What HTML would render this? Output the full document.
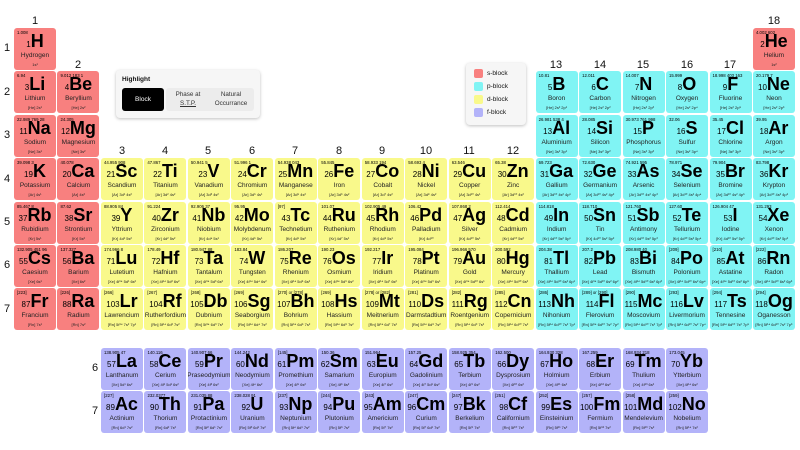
<!DOCTYPE html>
<html><head><meta charset="utf-8"><style>
*{margin:0;padding:0;box-sizing:border-box}
body{width:800px;height:450px;background:#fff;font-family:"Liberation Sans",sans-serif;position:relative;overflow:hidden;color:#111}
.g{position:absolute;display:grid;grid-template-columns:repeat(18,43.47px);grid-template-rows:repeat(7,43.4px)}
.f{position:absolute;left:101px;top:348px;display:grid;grid-template-columns:repeat(14,43.47px);grid-template-rows:repeat(2,43px)}
.c{width:42px;height:42px;border-radius:3px;position:relative;text-align:center;overflow:hidden}
.s{background:#f8807f}.p{background:#80f4f4}.d{background:#f9f98b}.fb{background:#b3b3f9}
.c i{position:absolute;left:3px;top:2px;font-style:normal;font-size:4.3px;white-space:nowrap;color:#000}
.c b{position:absolute;left:0;right:0;top:4px;font-size:18px;line-height:19px;font-weight:bold;white-space:nowrap;color:#000}
.c b small{font-size:8px;font-weight:normal}
.c u{position:absolute;left:-4px;right:-4px;top:24px;text-decoration:none;font-size:6.5px;white-space:nowrap;color:#222}
.c em{position:absolute;left:-4px;right:-4px;top:34px;font-style:normal;font-size:4px;white-space:nowrap;color:#222}
.n{position:absolute;font-size:11px;text-align:center;width:20px}
.hl{position:absolute;left:116px;top:70px;width:144px;height:48px;background:#f6f6f6;border-radius:4px;box-shadow:0 1px 3px rgba(0,0,0,.25)}
.lg{position:absolute;left:466px;top:63px;width:60px;height:62px;background:#f6f6f6;border-radius:4px;box-shadow:0 1px 3px rgba(0,0,0,.25);font-size:6.5px}
.lg div{position:absolute;left:8px;width:9px;height:9px;border-radius:2px}
.lg span{position:absolute;left:21px}
</style></head><body>
<div class="n" style="left:25px;top:15px">1</div>
<div class="n" style="left:68px;top:59px">2</div>
<div class="n" style="left:112px;top:145px">3</div><div class="n" style="left:155px;top:145px">4</div><div class="n" style="left:198px;top:145px">5</div><div class="n" style="left:242px;top:145px">6</div><div class="n" style="left:285px;top:145px">7</div><div class="n" style="left:329px;top:145px">8</div><div class="n" style="left:372px;top:145px">9</div><div class="n" style="left:416px;top:145px">10</div><div class="n" style="left:459px;top:145px">11</div><div class="n" style="left:503px;top:145px">12</div>
<div class="n" style="left:546px;top:59px">13</div><div class="n" style="left:590px;top:59px">14</div><div class="n" style="left:633px;top:59px">15</div><div class="n" style="left:677px;top:59px">16</div><div class="n" style="left:720px;top:59px">17</div><div class="n" style="left:764px;top:15px">18</div>
<div class="n" style="left:-3px;top:42px">1</div><div class="n" style="left:-3px;top:86px">2</div><div class="n" style="left:-3px;top:129px">3</div><div class="n" style="left:-3px;top:173px">4</div><div class="n" style="left:-3px;top:216px">5</div><div class="n" style="left:-3px;top:259px">6</div><div class="n" style="left:-3px;top:303px">7</div>
<div class="n" style="left:85px;top:362px">6</div><div class="n" style="left:85px;top:405px">7</div>

<div class="hl"><div style="position:absolute;left:6px;top:6px;font-size:6.5px;font-weight:bold">Highlight</div>
<div style="position:absolute;left:6px;top:18px;width:42px;height:23px;background:#000;border-radius:3px;color:#fff;font-size:6.5px;line-height:23px;text-align:center">Block</div>
<div style="position:absolute;left:50px;top:18px;width:88px;height:23px;background:#ececec;border-radius:3px"></div>
<div style="position:absolute;left:50px;top:20px;width:44px;font-size:6.3px;text-align:center;line-height:9px;color:#333">Phase at<br><span style="text-decoration:underline">S.T.P.</span></div>
<div style="position:absolute;left:92px;top:20px;width:46px;font-size:6.3px;text-align:center;line-height:9px;color:#333">Natural<br>Occurrance</div></div>
<div class="lg"><div class="s" style="top:6px"></div><span style="top:7px">s-block</span><div class="p" style="top:19px"></div><span style="top:20px">p-block</span><div class="d" style="top:32px"></div><span style="top:33px">d-block</span><div class="fb" style="top:45px"></div><span style="top:46px">f-block</span></div>

<div class="g" style="left:14px;top:28px">
<div class="c s" style="grid-area:1/1"><i>1.008</i><b><small>1</small>H</b><u>Hydrogen</u><em>1s¹</em></div>
<div class="c s" style="grid-area:1/18"><i>4.002 602</i><b><small>2</small>He</b><u>Helium</u><em>1s²</em></div>
<div class="c s" style="grid-area:2/1"><i>6.94</i><b><small>3</small>Li</b><u>Lithium</u><em>[He] 2s¹</em></div>
<div class="c s" style="grid-area:2/2"><i>9.012 183 1</i><b><small>4</small>Be</b><u>Beryllium</u><em>[He] 2s²</em></div>
<div class="c p" style="grid-area:2/13"><i>10.81</i><b><small>5</small>B</b><u>Boron</u><em>[He] 2s² 2p¹</em></div>
<div class="c p" style="grid-area:2/14"><i>12.011</i><b><small>6</small>C</b><u>Carbon</u><em>[He] 2s² 2p²</em></div>
<div class="c p" style="grid-area:2/15"><i>14.007</i><b><small>7</small>N</b><u>Nitrogen</u><em>[He] 2s² 2p³</em></div>
<div class="c p" style="grid-area:2/16"><i>15.999</i><b><small>8</small>O</b><u>Oxygen</u><em>[He] 2s² 2p⁴</em></div>
<div class="c p" style="grid-area:2/17"><i>18.998 403 163</i><b><small>9</small>F</b><u>Fluorine</u><em>[He] 2s² 2p⁵</em></div>
<div class="c p" style="grid-area:2/18"><i>20.179 7</i><b><small>10</small>Ne</b><u>Neon</u><em>[He] 2s² 2p⁶</em></div>
<div class="c s" style="grid-area:3/1"><i>22.989 769 28</i><b><small>11</small>Na</b><u>Sodium</u><em>[Ne] 3s¹</em></div>
<div class="c s" style="grid-area:3/2"><i>24.305</i><b><small>12</small>Mg</b><u>Magnesium</u><em>[Ne] 3s²</em></div>
<div class="c p" style="grid-area:3/13"><i>26.981 538 4</i><b><small>13</small>Al</b><u>Aluminium</u><em>[Ne] 3s² 3p¹</em></div>
<div class="c p" style="grid-area:3/14"><i>28.085</i><b><small>14</small>Si</b><u>Silicon</u><em>[Ne] 3s² 3p²</em></div>
<div class="c p" style="grid-area:3/15"><i>30.973 761 998</i><b><small>15</small>P</b><u>Phosphorus</u><em>[Ne] 3s² 3p³</em></div>
<div class="c p" style="grid-area:3/16"><i>32.06</i><b><small>16</small>S</b><u>Sulfur</u><em>[Ne] 3s² 3p⁴</em></div>
<div class="c p" style="grid-area:3/17"><i>35.45</i><b><small>17</small>Cl</b><u>Chlorine</u><em>[Ne] 3s² 3p⁵</em></div>
<div class="c p" style="grid-area:3/18"><i>39.95</i><b><small>18</small>Ar</b><u>Argon</u><em>[Ne] 3s² 3p⁶</em></div>
<div class="c s" style="grid-area:4/1"><i>39.098 3</i><b><small>19</small>K</b><u>Potassium</u><em>[Ar] 4s¹</em></div>
<div class="c s" style="grid-area:4/2"><i>40.078</i><b><small>20</small>Ca</b><u>Calcium</u><em>[Ar] 4s²</em></div>
<div class="c d" style="grid-area:4/3"><i>44.955 908</i><b><small>21</small>Sc</b><u>Scandium</u><em>[Ar] 3d¹ 4s²</em></div>
<div class="c d" style="grid-area:4/4"><i>47.867</i><b><small>22</small>Ti</b><u>Titanium</u><em>[Ar] 3d² 4s²</em></div>
<div class="c d" style="grid-area:4/5"><i>50.941 5</i><b><small>23</small>V</b><u>Vanadium</u><em>[Ar] 3d³ 4s²</em></div>
<div class="c d" style="grid-area:4/6"><i>51.996 1</i><b><small>24</small>Cr</b><u>Chromium</u><em>[Ar] 3d⁵ 4s¹</em></div>
<div class="c d" style="grid-area:4/7"><i>54.938 043</i><b><small>25</small>Mn</b><u>Manganese</u><em>[Ar] 3d⁵ 4s²</em></div>
<div class="c d" style="grid-area:4/8"><i>55.845</i><b><small>26</small>Fe</b><u>Iron</u><em>[Ar] 3d⁶ 4s²</em></div>
<div class="c d" style="grid-area:4/9"><i>58.933 194</i><b><small>27</small>Co</b><u>Cobalt</u><em>[Ar] 3d⁷ 4s²</em></div>
<div class="c d" style="grid-area:4/10"><i>58.693 4</i><b><small>28</small>Ni</b><u>Nickel</u><em>[Ar] 3d⁸ 4s²</em></div>
<div class="c d" style="grid-area:4/11"><i>63.546</i><b><small>29</small>Cu</b><u>Copper</u><em>[Ar] 3d¹⁰ 4s¹</em></div>
<div class="c d" style="grid-area:4/12"><i>65.38</i><b><small>30</small>Zn</b><u>Zinc</u><em>[Ar] 3d¹⁰ 4s²</em></div>
<div class="c p" style="grid-area:4/13"><i>69.723</i><b><small>31</small>Ga</b><u>Gallium</u><em>[Ar] 3d¹⁰ 4s² 4p¹</em></div>
<div class="c p" style="grid-area:4/14"><i>72.630</i><b><small>32</small>Ge</b><u>Germanium</u><em>[Ar] 3d¹⁰ 4s² 4p²</em></div>
<div class="c p" style="grid-area:4/15"><i>74.921 595</i><b><small>33</small>As</b><u>Arsenic</u><em>[Ar] 3d¹⁰ 4s² 4p³</em></div>
<div class="c p" style="grid-area:4/16"><i>78.971</i><b><small>34</small>Se</b><u>Selenium</u><em>[Ar] 3d¹⁰ 4s² 4p⁴</em></div>
<div class="c p" style="grid-area:4/17"><i>79.904</i><b><small>35</small>Br</b><u>Bromine</u><em>[Ar] 3d¹⁰ 4s² 4p⁵</em></div>
<div class="c p" style="grid-area:4/18"><i>83.798</i><b><small>36</small>Kr</b><u>Krypton</u><em>[Ar] 3d¹⁰ 4s² 4p⁶</em></div>
<div class="c s" style="grid-area:5/1"><i>85.467 8</i><b><small>37</small>Rb</b><u>Rubidium</u><em>[Kr] 5s¹</em></div>
<div class="c s" style="grid-area:5/2"><i>87.62</i><b><small>38</small>Sr</b><u>Strontium</u><em>[Kr] 5s²</em></div>
<div class="c d" style="grid-area:5/3"><i>88.905 84</i><b><small>39</small>Y</b><u>Yttrium</u><em>[Kr] 4d¹ 5s²</em></div>
<div class="c d" style="grid-area:5/4"><i>91.224</i><b><small>40</small>Zr</b><u>Zirconium</u><em>[Kr] 4d² 5s²</em></div>
<div class="c d" style="grid-area:5/5"><i>92.906 37</i><b><small>41</small>Nb</b><u>Niobium</u><em>[Kr] 4d⁴ 5s¹</em></div>
<div class="c d" style="grid-area:5/6"><i>95.95</i><b><small>42</small>Mo</b><u>Molybdenum</u><em>[Kr] 4d⁵ 5s¹</em></div>
<div class="c d" style="grid-area:5/7"><i>[97]</i><b><small>43</small>Tc</b><u>Technetium</u><em>[Kr] 4d⁵ 5s²</em></div>
<div class="c d" style="grid-area:5/8"><i>101.07</i><b><small>44</small>Ru</b><u>Ruthenium</u><em>[Kr] 4d⁷ 5s¹</em></div>
<div class="c d" style="grid-area:5/9"><i>102.905 49</i><b><small>45</small>Rh</b><u>Rhodium</u><em>[Kr] 4d⁸ 5s¹</em></div>
<div class="c d" style="grid-area:5/10"><i>106.42</i><b><small>46</small>Pd</b><u>Palladium</u><em>[Kr] 4d¹⁰</em></div>
<div class="c d" style="grid-area:5/11"><i>107.868 2</i><b><small>47</small>Ag</b><u>Silver</u><em>[Kr] 4d¹⁰ 5s¹</em></div>
<div class="c d" style="grid-area:5/12"><i>112.414</i><b><small>48</small>Cd</b><u>Cadmium</u><em>[Kr] 4d¹⁰ 5s²</em></div>
<div class="c p" style="grid-area:5/13"><i>114.818</i><b><small>49</small>In</b><u>Indium</u><em>[Kr] 4d¹⁰ 5s² 5p¹</em></div>
<div class="c p" style="grid-area:5/14"><i>118.710</i><b><small>50</small>Sn</b><u>Tin</u><em>[Kr] 4d¹⁰ 5s² 5p²</em></div>
<div class="c p" style="grid-area:5/15"><i>121.760</i><b><small>51</small>Sb</b><u>Antimony</u><em>[Kr] 4d¹⁰ 5s² 5p³</em></div>
<div class="c p" style="grid-area:5/16"><i>127.60</i><b><small>52</small>Te</b><u>Tellurium</u><em>[Kr] 4d¹⁰ 5s² 5p⁴</em></div>
<div class="c p" style="grid-area:5/17"><i>126.904 47</i><b><small>53</small>I</b><u>Iodine</u><em>[Kr] 4d¹⁰ 5s² 5p⁵</em></div>
<div class="c p" style="grid-area:5/18"><i>131.293</i><b><small>54</small>Xe</b><u>Xenon</u><em>[Kr] 4d¹⁰ 5s² 5p⁶</em></div>
<div class="c s" style="grid-area:6/1"><i>132.905 451 96</i><b><small>55</small>Cs</b><u>Caesium</u><em>[Xe] 6s¹</em></div>
<div class="c s" style="grid-area:6/2"><i>137.327</i><b><small>56</small>Ba</b><u>Barium</u><em>[Xe] 6s²</em></div>
<div class="c d" style="grid-area:6/3"><i>174.966 8</i><b><small>71</small>Lu</b><u>Lutetium</u><em>[Xe] 4f¹⁴ 5d¹ 6s²</em></div>
<div class="c d" style="grid-area:6/4"><i>178.49</i><b><small>72</small>Hf</b><u>Hafnium</u><em>[Xe] 4f¹⁴ 5d² 6s²</em></div>
<div class="c d" style="grid-area:6/5"><i>180.947 88</i><b><small>73</small>Ta</b><u>Tantalum</u><em>[Xe] 4f¹⁴ 5d³ 6s²</em></div>
<div class="c d" style="grid-area:6/6"><i>183.84</i><b><small>74</small>W</b><u>Tungsten</u><em>[Xe] 4f¹⁴ 5d⁴ 6s²</em></div>
<div class="c d" style="grid-area:6/7"><i>186.207</i><b><small>75</small>Re</b><u>Rhenium</u><em>[Xe] 4f¹⁴ 5d⁵ 6s²</em></div>
<div class="c d" style="grid-area:6/8"><i>190.23</i><b><small>76</small>Os</b><u>Osmium</u><em>[Xe] 4f¹⁴ 5d⁶ 6s²</em></div>
<div class="c d" style="grid-area:6/9"><i>192.217</i><b><small>77</small>Ir</b><u>Iridium</u><em>[Xe] 4f¹⁴ 5d⁷ 6s²</em></div>
<div class="c d" style="grid-area:6/10"><i>195.084</i><b><small>78</small>Pt</b><u>Platinum</u><em>[Xe] 4f¹⁴ 5d⁹ 6s¹</em></div>
<div class="c d" style="grid-area:6/11"><i>196.966 570</i><b><small>79</small>Au</b><u>Gold</u><em>[Xe] 4f¹⁴ 5d¹⁰ 6s¹</em></div>
<div class="c d" style="grid-area:6/12"><i>200.592</i><b><small>80</small>Hg</b><u>Mercury</u><em>[Xe] 4f¹⁴ 5d¹⁰ 6s²</em></div>
<div class="c p" style="grid-area:6/13"><i>204.38</i><b><small>81</small>Tl</b><u>Thallium</u><em>[Xe] 4f¹⁴ 5d¹⁰ 6s² 6p¹</em></div>
<div class="c p" style="grid-area:6/14"><i>207.2</i><b><small>82</small>Pb</b><u>Lead</u><em>[Xe] 4f¹⁴ 5d¹⁰ 6s² 6p²</em></div>
<div class="c p" style="grid-area:6/15"><i>208.980 40</i><b><small>83</small>Bi</b><u>Bismuth</u><em>[Xe] 4f¹⁴ 5d¹⁰ 6s² 6p³</em></div>
<div class="c p" style="grid-area:6/16"><i>[209]</i><b><small>84</small>Po</b><u>Polonium</u><em>[Xe] 4f¹⁴ 5d¹⁰ 6s² 6p⁴</em></div>
<div class="c p" style="grid-area:6/17"><i>[210]</i><b><small>85</small>At</b><u>Astatine</u><em>[Xe] 4f¹⁴ 5d¹⁰ 6s² 6p⁵</em></div>
<div class="c p" style="grid-area:6/18"><i>[222]</i><b><small>86</small>Rn</b><u>Radon</u><em>[Xe] 4f¹⁴ 5d¹⁰ 6s² 6p⁶</em></div>
<div class="c s" style="grid-area:7/1"><i>[223]</i><b><small>87</small>Fr</b><u>Francium</u><em>[Rn] 7s¹</em></div>
<div class="c s" style="grid-area:7/2"><i>[226]</i><b><small>88</small>Ra</b><u>Radium</u><em>[Rn] 7s²</em></div>
<div class="c d" style="grid-area:7/3"><i>[266]</i><b><small>103</small>Lr</b><u>Lawrencium</u><em>[Rn] 5f¹⁴ 7s² 7p¹</em></div>
<div class="c d" style="grid-area:7/4"><i>[267]</i><b><small>104</small>Rf</b><u>Rutherfordium</u><em>[Rn] 5f¹⁴ 6d² 7s²</em></div>
<div class="c d" style="grid-area:7/5"><i>[268]</i><b><small>105</small>Db</b><u>Dubnium</u><em>[Rn] 5f¹⁴ 6d³ 7s²</em></div>
<div class="c d" style="grid-area:7/6"><i>[269]</i><b><small>106</small>Sg</b><u>Seaborgium</u><em>[Rn] 5f¹⁴ 6d⁴ 7s²</em></div>
<div class="c d" style="grid-area:7/7"><i>[270] or [278]</i><b><small>107</small>Bh</b><u>Bohrium</u><em>[Rn] 5f¹⁴ 6d⁵ 7s²</em></div>
<div class="c d" style="grid-area:7/8"><i>[269]</i><b><small>108</small>Hs</b><u>Hassium</u><em>[Rn] 5f¹⁴ 6d⁶ 7s²</em></div>
<div class="c d" style="grid-area:7/9"><i>[278] or [282]</i><b><small>109</small>Mt</b><u>Meitnerium</u><em>[Rn] 5f¹⁴ 6d⁷ 7s²</em></div>
<div class="c d" style="grid-area:7/10"><i>[281]</i><b><small>110</small>Ds</b><u>Darmstadtium</u><em>[Rn] 5f¹⁴ 6d⁸ 7s²</em></div>
<div class="c d" style="grid-area:7/11"><i>[282]</i><b><small>111</small>Rg</b><u>Roentgenium</u><em>[Rn] 5f¹⁴ 6d⁹ 7s²</em></div>
<div class="c d" style="grid-area:7/12"><i>[285]</i><b><small>112</small>Cn</b><u>Copernicium</u><em>[Rn] 5f¹⁴ 6d¹⁰ 7s²</em></div>
<div class="c p" style="grid-area:7/13"><i>[286]</i><b><small>113</small>Nh</b><u>Nihonium</u><em>[Rn] 5f¹⁴ 6d¹⁰ 7s² 7p¹</em></div>
<div class="c p" style="grid-area:7/14"><i>[289] or [290]</i><b><small>114</small>Fl</b><u>Flerovium</u><em>[Rn] 5f¹⁴ 6d¹⁰ 7s² 7p²</em></div>
<div class="c p" style="grid-area:7/15"><i>[290]</i><b><small>115</small>Mc</b><u>Moscovium</u><em>[Rn] 5f¹⁴ 6d¹⁰ 7s² 7p³</em></div>
<div class="c p" style="grid-area:7/16"><i>[293]</i><b><small>116</small>Lv</b><u>Livermorium</u><em>[Rn] 5f¹⁴ 6d¹⁰ 7s² 7p⁴</em></div>
<div class="c p" style="grid-area:7/17"><i>[294]</i><b><small>117</small>Ts</b><u>Tennesine</u><em>[Rn] 5f¹⁴ 6d¹⁰ 7s² 7p⁵</em></div>
<div class="c p" style="grid-area:7/18"><i>[294]</i><b><small>118</small>Og</b><u>Oganesson</u><em>[Rn] 5f¹⁴ 6d¹⁰ 7s² 7p⁶</em></div>
</div>

<div class="f">
<div class="c fb"><i>138.905 47</i><b><small>57</small>La</b><u>Lanthanum</u><em>[Xe] 5d¹ 6s²</em></div>
<div class="c fb"><i>140.116</i><b><small>58</small>Ce</b><u>Cerium</u><em>[Xe] 4f¹ 5d¹ 6s²</em></div>
<div class="c fb"><i>140.907 66</i><b><small>59</small>Pr</b><u>Praseodymium</u><em>[Xe] 4f³ 6s²</em></div>
<div class="c fb"><i>144.242</i><b><small>60</small>Nd</b><u>Neodymium</u><em>[Xe] 4f⁴ 6s²</em></div>
<div class="c fb"><i>[145]</i><b><small>61</small>Pm</b><u>Promethium</u><em>[Xe] 4f⁵ 6s²</em></div>
<div class="c fb"><i>150.36</i><b><small>62</small>Sm</b><u>Samarium</u><em>[Xe] 4f⁶ 6s²</em></div>
<div class="c fb"><i>151.964</i><b><small>63</small>Eu</b><u>Europium</u><em>[Xe] 4f⁷ 6s²</em></div>
<div class="c fb"><i>157.25</i><b><small>64</small>Gd</b><u>Gadolinium</u><em>[Xe] 4f⁷ 5d¹ 6s²</em></div>
<div class="c fb"><i>158.925 354</i><b><small>65</small>Tb</b><u>Terbium</u><em>[Xe] 4f⁹ 6s²</em></div>
<div class="c fb"><i>162.500</i><b><small>66</small>Dy</b><u>Dysprosium</u><em>[Xe] 4f¹⁰ 6s²</em></div>
<div class="c fb"><i>164.930 328</i><b><small>67</small>Ho</b><u>Holmium</u><em>[Xe] 4f¹¹ 6s²</em></div>
<div class="c fb"><i>167.259</i><b><small>68</small>Er</b><u>Erbium</u><em>[Xe] 4f¹² 6s²</em></div>
<div class="c fb"><i>168.934 218</i><b><small>69</small>Tm</b><u>Thulium</u><em>[Xe] 4f¹³ 6s²</em></div>
<div class="c fb"><i>173.045</i><b><small>70</small>Yb</b><u>Ytterbium</u><em>[Xe] 4f¹⁴ 6s²</em></div>
<div class="c fb"><i>[227]</i><b><small>89</small>Ac</b><u>Actinium</u><em>[Rn] 6d¹ 7s²</em></div>
<div class="c fb"><i>232.0377</i><b><small>90</small>Th</b><u>Thorium</u><em>[Rn] 6d² 7s²</em></div>
<div class="c fb"><i>231.035 88</i><b><small>91</small>Pa</b><u>Protactinium</u><em>[Rn] 5f² 6d¹ 7s²</em></div>
<div class="c fb"><i>238.028 91</i><b><small>92</small>U</b><u>Uranium</u><em>[Rn] 5f³ 6d¹ 7s²</em></div>
<div class="c fb"><i>[237]</i><b><small>93</small>Np</b><u>Neptunium</u><em>[Rn] 5f⁴ 6d¹ 7s²</em></div>
<div class="c fb"><i>[244]</i><b><small>94</small>Pu</b><u>Plutonium</u><em>[Rn] 5f⁶ 7s²</em></div>
<div class="c fb"><i>[243]</i><b><small>95</small>Am</b><u>Americium</u><em>[Rn] 5f⁷ 7s²</em></div>
<div class="c fb"><i>[247]</i><b><small>96</small>Cm</b><u>Curium</u><em>[Rn] 5f⁷ 6d¹ 7s²</em></div>
<div class="c fb"><i>[247]</i><b><small>97</small>Bk</b><u>Berkelium</u><em>[Rn] 5f⁹ 7s²</em></div>
<div class="c fb"><i>[251]</i><b><small>98</small>Cf</b><u>Californium</u><em>[Rn] 5f¹⁰ 7s²</em></div>
<div class="c fb"><i>[252]</i><b><small>99</small>Es</b><u>Einsteinium</u><em>[Rn] 5f¹¹ 7s²</em></div>
<div class="c fb"><i>[257]</i><b><small>100</small>Fm</b><u>Fermium</u><em>[Rn] 5f¹² 7s²</em></div>
<div class="c fb"><i>[258]</i><b><small>101</small>Md</b><u>Mendelevium</u><em>[Rn] 5f¹³ 7s²</em></div>
<div class="c fb"><i>[259]</i><b><small>102</small>No</b><u>Nobelium</u><em>[Rn] 5f¹⁴ 7s²</em></div>
</div>
</body></html>
